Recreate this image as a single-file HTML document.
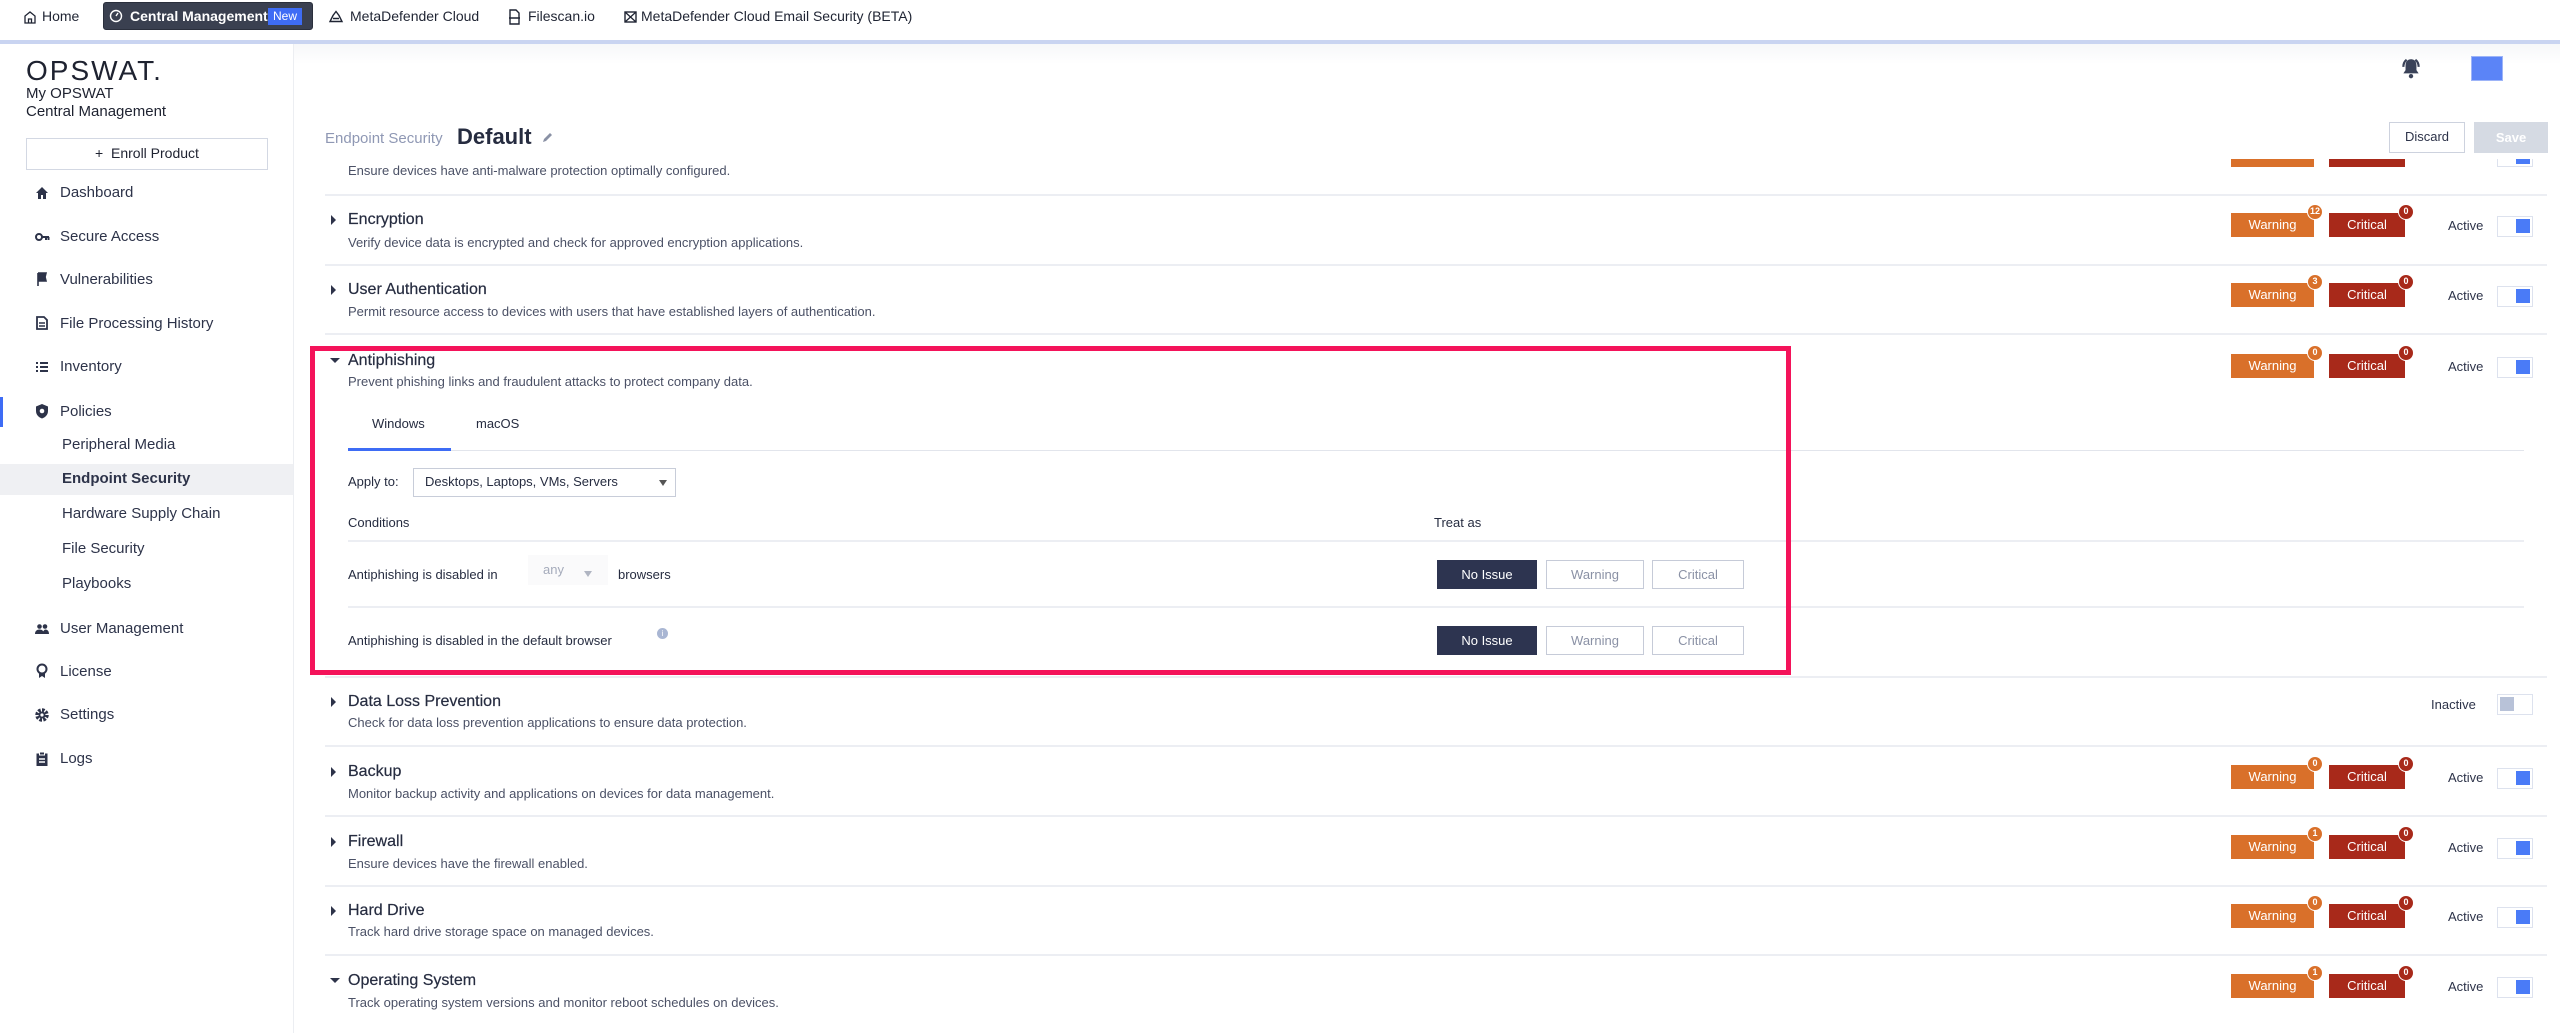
<!DOCTYPE html>
<html><head><meta charset="utf-8">
<style>
*{box-sizing:border-box;margin:0;padding:0}
body{width:2560px;height:1033px;overflow:hidden;background:#fff;font-family:"Liberation Sans",sans-serif;color:#2d3349;position:relative}
.a{position:absolute;white-space:nowrap}
.nav{font-size:14px;color:#1f2433;top:8px}
.side{font-size:15px;color:#2d3349}
.ico{position:absolute;left:34px;width:16px;height:16px}
.t{font-size:16px;color:#262c40;left:348px;-webkit-text-stroke:0.2px #262c40}
.d{font-size:13px;color:#4b5166;left:348px}
.arr{left:331px;width:0;height:0;border-top:5px solid transparent;border-bottom:5px solid transparent;border-left:5px solid #2d3349}
.arrd{left:330px;width:0;height:0;border-left:5px solid transparent;border-right:5px solid transparent;border-top:5px solid #2d3349}
.sep{left:325px;width:2222px;height:2px;background:#eceef3}
.w{left:2231px;width:83px;height:24px;background:#d9702a;color:#fff;font-size:13px;text-align:center;line-height:24px}
.c{left:2329px;width:76px;height:24px;background:#a8291a;color:#fff;font-size:13px;text-align:center;line-height:24px}
.b{position:absolute;right:-9px;top:-9px;width:16px;height:16px;border-radius:50%;border:1.5px solid #fff;color:#fff;font-size:9px;line-height:13px;text-align:center;font-weight:bold}
.w .b{background:#d9702a}.c .b{background:#a8291a}
.act{left:2448px;font-size:13px;color:#2d3349}
.tg{left:2497px;width:36px;height:21px;border:1.5px solid #dde2ee;background:#fff}
.tg i{position:absolute;right:2px;top:2px;width:14px;height:14px;background:#4a7bf7}
.tg.off i{left:2px;right:auto;background:#b8c2d8}
.btn{height:29px;font-size:13px;text-align:center;line-height:27px;border:1.5px solid #c6cbd8;color:#8a91a5;background:#fff}
</style></head><body>

<!-- top nav -->
<div class="a" style="left:0;top:0;width:2560px;height:40px;background:#fff"></div>
<div class="a" style="left:0;top:40px;width:2560px;height:4px;background:#c9d4f1"></div>
<svg class="a" style="left:24px;top:11px" width="12" height="13" viewBox="0 0 12 13"><path d="M1 12V5L6 1l5 4v7H1zM4.5 12V8h3v4" fill="none" stroke="#1f2433" stroke-width="1.3"/></svg>
<div class="a nav" style="left:42px">Home</div>
<div class="a" style="left:103px;top:2px;width:210px;height:28px;background:#3a4050;border-radius:3px;border:1px solid #2a2f3c"></div>
<svg class="a" style="left:109px;top:9px" width="14" height="14" viewBox="0 0 14 14"><circle cx="7" cy="7" r="5.5" fill="none" stroke="#fff" stroke-width="1.4"/><path d="M7 7l2-3" stroke="#fff" stroke-width="1.4"/></svg>
<div class="a nav" style="left:130px;color:#fff;font-weight:bold">Central Management</div>
<div class="a" style="left:268px;top:8px;width:34px;height:17px;background:#3e6cf5;color:#fff;font-size:12px;text-align:center;line-height:17px">New</div>
<svg class="a" style="left:328px;top:10px" width="16" height="13" viewBox="0 0 16 13"><path d="M2 11.5h12l-3-6-3-4-3 4z M5 8.5h6" fill="none" stroke="#1f2433" stroke-width="1.4"/></svg>
<div class="a nav" style="left:350px">MetaDefender Cloud</div>
<svg class="a" style="left:508px;top:9px" width="13" height="16" viewBox="0 0 13 16"><path d="M2 1h6l3 3v11H2zM1 9h11" fill="none" stroke="#1f2433" stroke-width="1.4"/></svg>
<div class="a nav" style="left:528px">Filescan.io</div>
<svg class="a" style="left:624px;top:11px" width="13" height="12" viewBox="0 0 13 12"><rect x="1" y="1" width="11" height="10" fill="none" stroke="#1f2433" stroke-width="1.4"/><path d="M1 1l11 10M12 1L1 11" stroke="#1f2433" stroke-width="1.3"/></svg>
<div class="a nav" style="left:641px">MetaDefender Cloud Email Security (BETA)</div>

<!-- sidebar -->
<div class="a" style="left:293px;top:44px;width:1px;height:989px;background:#eceef2"></div>
<div class="a" style="left:26px;top:55px;font-size:28px;letter-spacing:2px;color:#1e2230;font-weight:normal">OPSWAT.</div>
<div class="a side" style="left:26px;top:85px;color:#1e2230">My OPSWAT</div>
<div class="a side" style="left:26px;top:103px;color:#1e2230">Central Management</div>
<div class="a" style="left:26px;top:138px;width:242px;height:32px;border:1.5px solid #d3d8e3;font-size:14px;text-align:center;line-height:29px;color:#1e2230">+&nbsp; Enroll Product</div>

<svg class="ico" style="top:185px" viewBox="0 0 16 16"><path d="M8 2L2 8h2v6h3v-4h2v4h3V8h2z" fill="#2d3349"/></svg>
<div class="a side" style="left:60px;top:184px">Dashboard</div>
<svg class="ico" style="top:229px" viewBox="0 0 16 16"><circle cx="5" cy="8" r="3" fill="none" stroke="#2d3349" stroke-width="2"/><path d="M8 8h7M12 8v3M14.5 8v3" stroke="#2d3349" stroke-width="2"/></svg>
<div class="a side" style="left:60px;top:228px">Secure Access</div>
<svg class="ico" style="top:271px" viewBox="0 0 16 16"><path d="M4 2v13M4 2h8l-1 4 1 4H4" fill="#2d3349" stroke="#2d3349" stroke-width="1.6"/></svg>
<div class="a side" style="left:60px;top:271px">Vulnerabilities</div>
<svg class="ico" style="top:315px" viewBox="0 0 16 16"><path d="M3 2h7l3 3v9H3z" fill="none" stroke="#2d3349" stroke-width="1.8"/><path d="M5 8h6M5 11h6" stroke="#2d3349" stroke-width="1.5"/></svg>
<div class="a side" style="left:60px;top:315px">File Processing History</div>
<svg class="ico" style="top:359px" viewBox="0 0 16 16"><path d="M2 4h2M6 4h8M2 8h2M6 8h8M2 12h2M6 12h8" stroke="#2d3349" stroke-width="2"/></svg>
<div class="a side" style="left:60px;top:358px">Inventory</div>
<div class="a" style="left:0;top:397px;width:3px;height:30px;background:#3e6cf5"></div>
<svg class="ico" style="top:403px" viewBox="0 0 16 16"><path d="M8 1l6 2.5v4.5c0 4-3 6.5-6 7.5-3-1-6-3.5-6-7.5V3.5z" fill="#2d3349"/><circle cx="8" cy="8" r="2.3" fill="#fff"/></svg>
<div class="a side" style="left:60px;top:403px">Policies</div>
<div class="a side" style="left:62px;top:436px">Peripheral Media</div>
<div class="a" style="left:0;top:464px;width:293px;height:31px;background:#eff0f3"></div>
<div class="a side" style="left:62px;top:470px;font-weight:bold">Endpoint Security</div>
<div class="a side" style="left:62px;top:505px">Hardware Supply Chain</div>
<div class="a side" style="left:62px;top:540px">File Security</div>
<div class="a side" style="left:62px;top:575px">Playbooks</div>
<svg class="ico" style="top:621px" viewBox="0 0 16 16"><circle cx="5.5" cy="5.5" r="2.3" fill="#2d3349"/><circle cx="11" cy="5.5" r="2.3" fill="#2d3349"/><path d="M1 13c0-3 2-4.5 4.5-4.5S10 10 10 13zM9 13c0-2 0-3 2-4.5 2.5 0 4 1.5 4 4.5z" fill="#2d3349"/></svg>
<div class="a side" style="left:60px;top:620px">User Management</div>
<svg class="ico" style="top:663px" viewBox="0 0 16 16"><circle cx="8" cy="6" r="4.5" fill="none" stroke="#2d3349" stroke-width="2"/><path d="M5 10v5l3-2 3 2v-5" fill="#2d3349"/></svg>
<div class="a side" style="left:60px;top:663px">License</div>
<svg class="ico" style="top:707px" viewBox="0 0 16 16"><circle cx="8" cy="8" r="5" fill="none" stroke="#2d3349" stroke-width="3.5" stroke-dasharray="2.6 1.3"/><circle cx="8" cy="8" r="3.5" fill="#2d3349"/><circle cx="8" cy="8" r="1.6" fill="#fff"/></svg>
<div class="a side" style="left:60px;top:706px">Settings</div>
<svg class="ico" style="top:751px" viewBox="0 0 16 16"><rect x="2.5" y="2.5" width="11" height="12.5" fill="#2d3349"/><rect x="5.5" y="1" width="5" height="3" fill="#2d3349" stroke="#fff" stroke-width="1"/><path d="M5 8h6M5 11h6" stroke="#fff" stroke-width="1.4"/></svg>
<div class="a side" style="left:60px;top:750px">Logs</div>

<!-- main header -->
<div class="a" style="left:294px;top:44px;width:2266px;height:20px;background:linear-gradient(#f6f7f9,#fff)"></div>
<svg class="a" style="left:2399px;top:57px" width="24" height="23" viewBox="0 0 22 21"><path d="M11 2c-3.5 0-5 2.5-5 6v4l-2 3h14l-2-3V8c0-3.5-1.5-6-5-6z" fill="#3a4258"/><circle cx="11" cy="17.5" r="2" fill="#3a4258"/><path d="M4 9c0-3 1-5 3-6.5M18 9c0-3-1-5-3-6.5" fill="none" stroke="#3a4258" stroke-width="2"/></svg>
<div class="a" style="left:2471px;top:56px;width:32px;height:25px;background:#5b84f7;border:1px solid #9db4f8"></div>
<div class="a" style="left:325px;top:130px;font-size:15px;color:#8f98b4">Endpoint Security</div>
<div class="a" style="left:457px;top:124px;font-size:22px;font-weight:bold;color:#262c40">Default</div>
<svg class="a" style="left:541px;top:131px" width="12" height="13" viewBox="0 0 12 13"><path d="M2 11l1-3 6-6 2 2-6 6z" fill="#8a91a5"/></svg>
<div class="a btn" style="left:2389px;top:122px;width:76px;height:31px;line-height:28px;color:#2d3349;border-color:#cdd2de;font-size:13px">Discard</div>
<div class="a" style="left:2474px;top:122px;width:74px;height:31px;background:#d5dae3;color:#fff;font-size:13px;font-weight:bold;text-align:center;line-height:31px">Save</div>

<!-- first partial row -->
<div class="a d" style="top:163px">Ensure devices have anti-malware protection optimally configured.</div>
<div class="a" style="left:2231px;top:159px;width:83px;height:8px;background:#d9702a"></div>
<div class="a" style="left:2329px;top:159px;width:76px;height:8px;background:#a8291a"></div>
<div class="a" style="left:2497px;top:159px;width:36px;height:8px;border:1.5px solid #dde2ee;border-top:0"><i style="position:absolute;right:2px;top:0;width:14px;height:5px;background:#4a7bf7"></i></div>
<div class="a sep" style="top:194px"></div>

<!-- Encryption -->
<div class="a arr" style="top:215px"></div>
<div class="a t" style="top:211px">Encryption</div>
<div class="a d" style="top:235px">Verify device data is encrypted and check for approved encryption applications.</div>
<div class="a w" style="top:213px">Warning<span class="b">12</span></div>
<div class="a c" style="top:213px">Critical<span class="b">0</span></div>
<div class="a act" style="top:218px">Active</div>
<div class="a tg" style="top:216px"><i></i></div>
<div class="a sep" style="top:264px"></div>

<!-- User Auth -->
<div class="a arr" style="top:285px"></div>
<div class="a t" style="top:281px">User Authentication</div>
<div class="a d" style="top:304px">Permit resource access to devices with users that have established layers of authentication.</div>
<div class="a w" style="top:283px">Warning<span class="b">3</span></div>
<div class="a c" style="top:283px">Critical<span class="b">0</span></div>
<div class="a act" style="top:288px">Active</div>
<div class="a tg" style="top:286px"><i></i></div>
<div class="a sep" style="top:333px"></div>

<!-- Antiphishing -->
<div class="a arrd" style="top:358px"></div>
<div class="a t" style="top:352px">Antiphishing</div>
<div class="a d" style="top:374px">Prevent phishing links and fraudulent attacks to protect company data.</div>
<div class="a w" style="top:354px">Warning<span class="b">0</span></div>
<div class="a c" style="top:354px">Critical<span class="b">0</span></div>
<div class="a act" style="top:359px">Active</div>
<div class="a tg" style="top:357px"><i></i></div>
<div class="a" style="left:372px;top:416px;font-size:13px;color:#262c40">Windows</div>
<div class="a" style="left:476px;top:416px;font-size:13px;color:#262c40">macOS</div>
<div class="a" style="left:348px;top:450px;width:2176px;height:1px;background:#e2e5ec"></div>
<div class="a" style="left:348px;top:448px;width:103px;height:3px;background:#3e6cf5"></div>
<div class="a" style="left:348px;top:474px;font-size:13px;color:#262c40">Apply to:</div>
<div class="a" style="left:413px;top:468px;width:263px;height:29px;border:1.5px solid #c8cdd9;font-size:13px;line-height:26px;padding-left:11px;color:#262c40">Desktops, Laptops, VMs, Servers</div>
<div class="a" style="left:659px;top:480px;border-left:4px solid transparent;border-right:4px solid transparent;border-top:6px solid #555"></div>
<div class="a" style="left:348px;top:515px;font-size:13px;color:#262c40">Conditions</div>
<div class="a" style="left:1434px;top:515px;font-size:13px;color:#262c40">Treat as</div>
<div class="a" style="left:348px;top:540px;width:2176px;height:2px;background:#eceef3"></div>
<div class="a" style="left:348px;top:567px;font-size:13px;color:#262c40">Antiphishing is disabled in</div>
<div class="a" style="left:528px;top:555px;width:80px;height:30px;background:#fafafb;font-size:13px;line-height:30px;padding-left:15px;color:#a5abbb">any</div>
<div class="a" style="left:584px;top:571px;border-left:4px solid transparent;border-right:4px solid transparent;border-top:6px solid #b0b5c2"></div>
<div class="a" style="left:618px;top:567px;font-size:13px;color:#262c40">browsers</div>
<div class="a btn" style="left:1437px;top:560px;width:100px;background:#2d3450;border-color:#2d3450;color:#fff">No Issue</div>
<div class="a btn" style="left:1546px;top:560px;width:98px">Warning</div>
<div class="a btn" style="left:1652px;top:560px;width:92px">Critical</div>
<div class="a" style="left:348px;top:606px;width:2176px;height:2px;background:#eceef3"></div>
<div class="a" style="left:348px;top:633px;font-size:13px;color:#262c40">Antiphishing is disabled in the default browser</div>
<div class="a" style="left:657px;top:628px;width:11px;height:11px;border-radius:50%;background:#a9b6d3;color:#fff;font-size:8px;text-align:center;line-height:11px">i</div>
<div class="a btn" style="left:1437px;top:626px;width:100px;background:#2d3450;border-color:#2d3450;color:#fff">No Issue</div>
<div class="a btn" style="left:1546px;top:626px;width:98px">Warning</div>
<div class="a btn" style="left:1652px;top:626px;width:92px">Critical</div>
<div class="a sep" style="top:676px"></div>
<div class="a" style="left:310px;top:346px;width:1481px;height:329px;border:5px solid #f4135a"></div>

<!-- DLP -->
<div class="a arr" style="top:697px"></div>
<div class="a t" style="top:693px">Data Loss Prevention</div>
<div class="a d" style="top:715px">Check for data loss prevention applications to ensure data protection.</div>
<div class="a act" style="left:2431px;top:697px">Inactive</div>
<div class="a tg off" style="top:694px"><i></i></div>
<div class="a sep" style="top:745px"></div>

<!-- Backup -->
<div class="a arr" style="top:767px"></div>
<div class="a t" style="top:763px">Backup</div>
<div class="a d" style="top:786px">Monitor backup activity and applications on devices for data management.</div>
<div class="a w" style="top:765px">Warning<span class="b">0</span></div>
<div class="a c" style="top:765px">Critical<span class="b">0</span></div>
<div class="a act" style="top:770px">Active</div>
<div class="a tg" style="top:768px"><i></i></div>
<div class="a sep" style="top:815px"></div>

<!-- Firewall -->
<div class="a arr" style="top:837px"></div>
<div class="a t" style="top:833px">Firewall</div>
<div class="a d" style="top:856px">Ensure devices have the firewall enabled.</div>
<div class="a w" style="top:835px">Warning<span class="b">1</span></div>
<div class="a c" style="top:835px">Critical<span class="b">0</span></div>
<div class="a act" style="top:840px">Active</div>
<div class="a tg" style="top:838px"><i></i></div>
<div class="a sep" style="top:885px"></div>

<!-- Hard Drive -->
<div class="a arr" style="top:906px"></div>
<div class="a t" style="top:902px">Hard Drive</div>
<div class="a d" style="top:924px">Track hard drive storage space on managed devices.</div>
<div class="a w" style="top:904px">Warning<span class="b">0</span></div>
<div class="a c" style="top:904px">Critical<span class="b">0</span></div>
<div class="a act" style="top:909px">Active</div>
<div class="a tg" style="top:907px"><i></i></div>
<div class="a sep" style="top:954px"></div>

<!-- OS -->
<div class="a arrd" style="top:978px"></div>
<div class="a t" style="top:972px">Operating System</div>
<div class="a d" style="top:995px">Track operating system versions and monitor reboot schedules on devices.</div>
<div class="a w" style="top:974px">Warning<span class="b">1</span></div>
<div class="a c" style="top:974px">Critical<span class="b">0</span></div>
<div class="a act" style="top:979px">Active</div>
<div class="a tg" style="top:977px"><i></i></div>

</body></html>
